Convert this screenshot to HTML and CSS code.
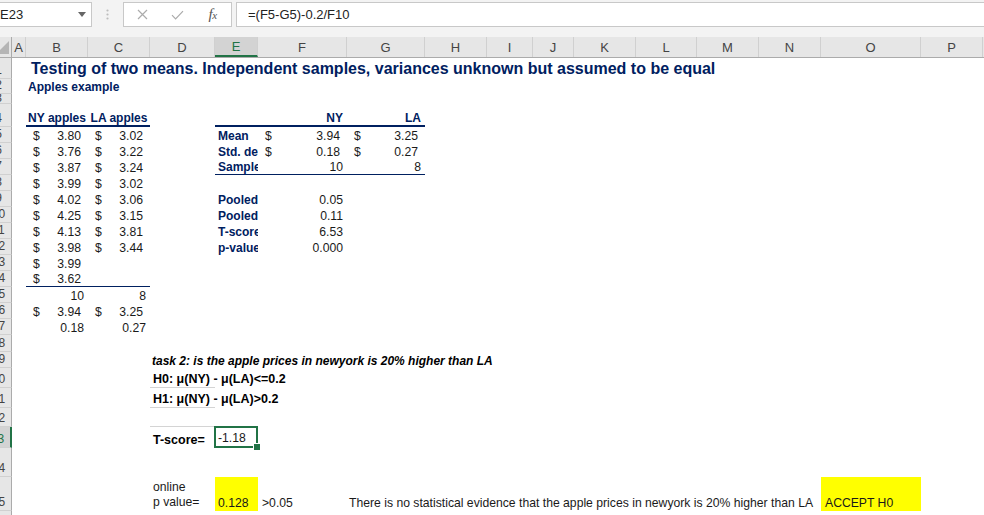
FILE: index.html
```html
<!DOCTYPE html>
<html>
<head>
<meta charset="utf-8">
<title>Testing of two means</title>
<link rel="stylesheet" href="styles.css">
</head>
<body>
<div class="fbar">
  <div class="namebox"><span>E23</span><svg width="8" height="5" viewBox="0 0 8 5"><path d="M0 0H8L4 5Z" fill="#666"/></svg></div>
  <div class="dots"><svg width="3" height="11" viewBox="0 0 3 11"><circle cx="1.5" cy="1.5" r="1.1" fill="#BDBDBD"/><circle cx="1.5" cy="5.5" r="1.1" fill="#BDBDBD"/><circle cx="1.5" cy="9.5" r="1.1" fill="#BDBDBD"/></svg></div>
  <div class="fnbox">
    <span class="slot s1"><svg width="11" height="11" viewBox="0 0 11 11"><path d="M1 1L10 10M10 1L1 10" stroke="#ABABAB" stroke-width="1.2" fill="none"/></svg></span>
    <span class="slot s2"><svg width="13" height="10" viewBox="0 0 13 10"><path d="M1 5.2L4.6 8.8L12 1.2" stroke="#ABABAB" stroke-width="1.2" fill="none"/></svg></span>
    <span class="slot s3"><span class="fx">f<span class="fxx">x</span></span></span>
  </div>
  <div class="formula">=(F5-G5)-0.2/F10</div>
</div>

<div class="sheet">
  <div class="row hdr">
    <div class="corner"><svg width="11" height="20" viewBox="0 0 11 20"><path d="M9 4V17H-4Z" fill="#B5B5B5"/></svg></div>
    <div class="ch">A</div><div class="ch">B</div><div class="ch">C</div><div class="ch">D</div>
    <div class="ch on">E</div><div class="ch">F</div><div class="ch">G</div><div class="ch">H</div>
    <div class="ch">I</div><div class="ch">J</div><div class="ch">K</div><div class="ch">L</div>
    <div class="ch">M</div><div class="ch">N</div><div class="ch">O</div><div class="ch">P</div>
  </div>

  <div class="row h21"><div class="rh"><span>1</span></div>
    <div class="cl cB title">Testing of two means. Independent samples, variances unknown but assumed to be equal</div>
  </div>
  <div class="row h15"><div class="rh"><span>2</span></div>
    <div class="cl cB hd sub">Apples example</div>
  </div>
  <div class="row h10"><div class="rh"><span>3</span></div></div>
  <div class="row h23"><div class="rh"><span>4</span></div>
    <div class="cl cB hd ctr tb2">NY apples</div>
    <div class="cl cC hd ctr tb2">LA apples</div>
    <div class="cl cE tb2"></div>
    <div class="cl cF hd num tb2">NY</div>
    <div class="cl cG hd num tb2">LA</div>
  </div>
  <div class="row h16"><div class="rh"><span>5</span></div>
    <div class="cl cB acc"><span>$</span><span>3.80</span></div>
    <div class="cl cC acc"><span>$</span><span>3.02</span></div>
    <div class="cl cE hd clip">Mean</div>
    <div class="cl cF acc"><span>$</span><span>3.94</span></div>
    <div class="cl cG acc"><span>$</span><span>3.25</span></div>
  </div>
  <div class="row h16"><div class="rh"><span>6</span></div>
    <div class="cl cB acc"><span>$</span><span>3.76</span></div>
    <div class="cl cC acc"><span>$</span><span>3.22</span></div>
    <div class="cl cE hd clip">Std. dev</div>
    <div class="cl cF acc"><span>$</span><span>0.18</span></div>
    <div class="cl cG acc"><span>$</span><span>0.27</span></div>
  </div>
  <div class="row h16"><div class="rh"><span>7</span></div>
    <div class="cl cB acc"><span>$</span><span>3.87</span></div>
    <div class="cl cC acc"><span>$</span><span>3.24</span></div>
    <div class="cl cE hd clip tb1">Sample size</div>
    <div class="cl cF num tb1">10</div>
    <div class="cl cG num tb1">8</div>
  </div>
  <div class="row h16"><div class="rh"><span>8</span></div>
    <div class="cl cB acc"><span>$</span><span>3.99</span></div>
    <div class="cl cC acc"><span>$</span><span>3.02</span></div>
  </div>
  <div class="row h16"><div class="rh"><span>9</span></div>
    <div class="cl cB acc"><span>$</span><span>4.02</span></div>
    <div class="cl cC acc"><span>$</span><span>3.06</span></div>
    <div class="cl cE hd clip">Pooled variance</div>
    <div class="cl cF num">0.05</div>
  </div>
  <div class="row h16"><div class="rh"><span>10</span></div>
    <div class="cl cB acc"><span>$</span><span>4.25</span></div>
    <div class="cl cC acc"><span>$</span><span>3.15</span></div>
    <div class="cl cE hd clip">Pooled std</div>
    <div class="cl cF num">0.11</div>
  </div>
  <div class="row h16"><div class="rh"><span>11</span></div>
    <div class="cl cB acc"><span>$</span><span>4.13</span></div>
    <div class="cl cC acc"><span>$</span><span>3.81</span></div>
    <div class="cl cE hd clip">T-score</div>
    <div class="cl cF num">6.53</div>
  </div>
  <div class="row h16"><div class="rh"><span>12</span></div>
    <div class="cl cB acc"><span>$</span><span>3.98</span></div>
    <div class="cl cC acc"><span>$</span><span>3.44</span></div>
    <div class="cl cE hd clip">p-value</div>
    <div class="cl cF num">0.000</div>
  </div>
  <div class="row h16"><div class="rh"><span>13</span></div>
    <div class="cl cB acc"><span>$</span><span>3.99</span></div>
  </div>
  <div class="row h16"><div class="rh"><span>14</span></div>
    <div class="cl cB acc tb1"><span>$</span><span>3.62</span></div>
    <div class="cl cC tb1"></div>
  </div>
  <div class="row h16"><div class="rh"><span>15</span></div>
    <div class="cl cB num">10</div>
    <div class="cl cC num">8</div>
  </div>
  <div class="row h16"><div class="rh"><span>16</span></div>
    <div class="cl cB acc"><span>$</span><span>3.94</span></div>
    <div class="cl cC acc"><span>$</span><span>3.25</span></div>
  </div>
  <div class="row h16"><div class="rh"><span>17</span></div>
    <div class="cl cB num">0.18</div>
    <div class="cl cC num">0.27</div>
  </div>
  <div class="row h17"><div class="rh"><span>18</span></div></div>
  <div class="row h16"><div class="rh"><span>19</span></div>
    <div class="cl cD bi">task 2: is the apple prices in newyork is 20% higher than LA</div>
  </div>
  <div class="row h20"><div class="rh"><span>20</span></div>
    <div class="cl cD hyp gb">H0: μ(NY) - μ(LA)&lt;=0.2</div>
  </div>
  <div class="row h20"><div class="rh"><span>21</span></div>
    <div class="cl cD hyp gb">H1: μ(NY) - μ(LA)&gt;0.2</div>
  </div>
  <div class="row h19"><div class="rh"><span>22</span></div>
    <div class="cl cD gb"></div>
  </div>
  <div class="row h21"><div class="rh on"><span>23</span></div>
    <div class="cl cD hyp">T-score=</div>
    <div class="cl cE sel">-1.18</div>
  </div>
  <div class="row h29"><div class="rh"><span>24</span></div></div>
  <div class="row h34"><div class="rh"><span>25</span></div>
    <div class="cl cD wrap"><span>online<br>p value=</span></div>
    <div class="cl cE yel">0.128</div>
    <div class="cl cF">&gt;0.05</div>
    <div class="cl cG txt">There is no statistical evidence that the apple prices in newyork is 20% higher than LA</div>
    <div class="cl cO yel">ACCEPT H0</div>
  </div>
  <div class="row h20"><div class="rh"><span>26</span></div></div>
</div>
</body>
</html>
```

FILE: styles.css
```css
* { box-sizing: border-box; }

html, body {
  margin: 0;
  height: 100%;
  overflow: hidden;
}

body {
  width: 984px;
  font-family: "Liberation Sans", Arial, sans-serif;
  background: #ffffff;
  color: #1a1a1a;
}

/* ---------- formula bar ---------- */
.fbar {
  display: flex;
  align-items: flex-start;
  height: 37px;
  padding-top: 2px;
  background: #f3f3f3;
}

.namebox {
  width: 92px;
  height: 25px;
  background: #fff;
  border: 1px solid #c8c8c8;
  border-left: 0;
  display: flex;
  align-items: center;
  justify-content: space-between;
  padding-right: 5px;
  font-size: 13px;
  color: #222;
}

.dots {
  width: 31px;
  height: 25px;
  display: flex;
  justify-content: center;
  align-items: center;
}

.fnbox {
  width: 109px;
  height: 25px;
  background: #fff;
  border: 1px solid #c8c8c8;
  display: flex;
  align-items: center;
}

.slot {
  display: flex;
  justify-content: center;
  align-items: center;
  height: 100%;
}
.s1 { width: 38px; }
.s2 { width: 34px; }
.s3 { width: 38px; }

.fx {
  font-family: "Liberation Serif", "Times New Roman", serif;
  font-style: italic;
  font-size: 15px;
  color: #555;
  letter-spacing: -0.5px;
}
.fxx { font-size: 11px; }

.formula {
  margin-left: 4px;
  flex: 1;
  height: 25px;
  background: #fff;
  border: 1px solid #c8c8c8;
  border-right: 0;
  padding-left: 11px;
  display: flex;
  align-items: center;
  font-size: 13px;
  color: #222;
}

/* ---------- sheet ---------- */
.row {
  display: grid;
  grid-template-columns: 12px 14px 62px 62px 65px 43px 89px 78px 62px 46px 41px 62px 61px 62px 62px 100px 62px;
  grid-template-rows: 100%;
}

.hdr {
  height: 21px;
  background: #e6e6e6;
  border-bottom: 1px solid #ababab;
}

.corner {
  border-right: 1px solid #ababab;
  overflow: hidden;
}

.ch {
  display: flex;
  align-items: center;
  justify-content: center;
  border-right: 1px solid #d0d0d0;
  font-size: 13px;
  color: #444;
}
.ch.on {
  background: #d3d3d3;
  color: #217346;
  border-bottom: 2px solid #217346;
}

.h10 { height: 10px; }
.h15 { height: 15px; }
.h16 { height: 16px; }
.h17 { height: 17px; }
.h19 { height: 19px; }
.h20 { height: 20px; }
.h21 { height: 21px; }
.h23 { height: 23px; }
.h29 { height: 29px; }
.h34 { height: 34px; }

.rh {
  grid-column: 1;
  background: #e6e6e6;
  border-right: 1px solid #ababab;
  border-bottom: 1px solid #d0d0d0;
  overflow: hidden;
  display: flex;
  justify-content: flex-end;
  align-items: flex-end;
  font-size: 12px;
  color: #444;
}
.rh span {
  flex: 0 0 25px;
  text-align: center;
  line-height: 14px;
  padding-bottom: 1px;
}
.h10 .rh span { line-height: 9px; padding-bottom: 0; }
.rh.on {
  background: #d3d3d3;
  color: #217346;
  border-right: 2px solid #217346;
}

/* cells */
.cB { grid-column: 3; }
.cC { grid-column: 4; }
.cD { grid-column: 5; }
.cE { grid-column: 6; }
.cF { grid-column: 7; }
.cG { grid-column: 8; }
.cO { grid-column: 16; }

.cl {
  display: flex;
  align-items: flex-end;
  min-width: 0;
  white-space: nowrap;
  padding: 0 3px 0 3px;
  font-size: 12.2px;
  line-height: 14px;
  color: #1a1a1a;
}

.num { justify-content: flex-end; padding-right: 4px; }
.acc { justify-content: space-between; padding: 0 7px 0 7px; }
.ctr { justify-content: center; }
.clip { overflow: hidden; }

.hd { font-weight: bold; font-size: 12px; color: #002060; }

.title {
  font-size: 16px;
  line-height: 18px;
  font-weight: bold;
  color: #002060;
  padding-left: 5px;
  padding-bottom: 1px;
}
.sub { padding-left: 2px; }

.tb2 { border-bottom: 2px solid #002060; }
.tb1 { border-bottom: 1px solid #002060; }
.gb { border-bottom: 1px solid #d4d4d4; }

.bi {
  font-weight: bold;
  font-style: italic;
  font-size: 12px;
  color: #000;
  padding-left: 2px;
}
.hyp {
  font-weight: bold;
  font-size: 12.5px;
  color: #000;
  padding-left: 3px;
  padding-bottom: 1px;
}

.sel {
  position: relative;
  align-items: center;
  padding-left: 3px;
  padding-top: 1px;
}
.sel::after {
  content: "";
  position: absolute;
  left: -1px;
  top: -1px;
  right: 0;
  bottom: 0;
  border: 2px solid #217346;
}
.sel::before {
  content: "";
  position: absolute;
  right: -3px;
  bottom: -3px;
  width: 6px;
  height: 6px;
  background: #217346;
  border: 1px solid #fff;
  z-index: 1;
}

.wrap { line-height: 15px; padding-left: 3px; padding-bottom: 1px; }
.yel { background: #ffff00; padding-left: 3px; padding-bottom: 1px; }
.cF.cl:not(.num):not(.acc) { padding-left: 4px; padding-bottom: 1px; }
.txt { padding-left: 2px; padding-bottom: 1px; }
.cO.yel { padding-left: 4px; }
```
